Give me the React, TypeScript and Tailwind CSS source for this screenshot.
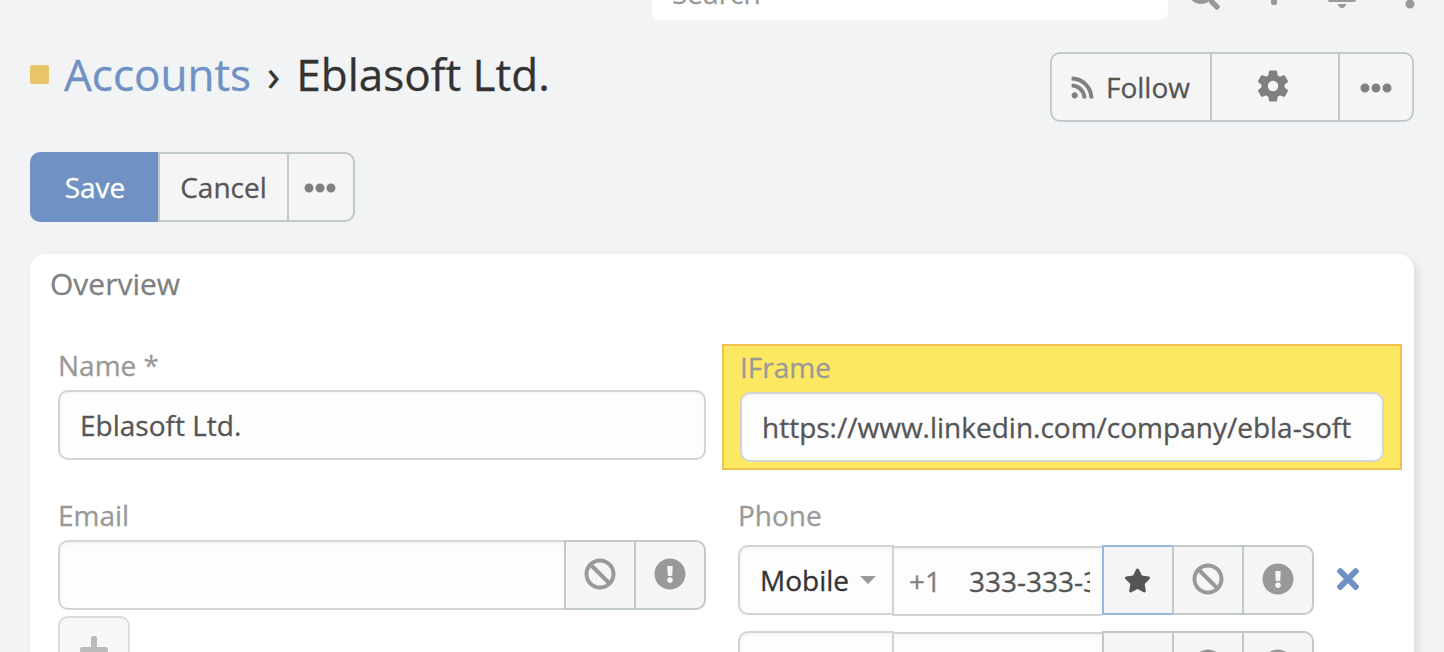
import type { ReactNode } from "react";
import {
  FaBan,
  FaBell,
  FaEllipsisH,
  FaEllipsisV,
  FaExclamationCircle,
  FaPlus,
  FaRss,
  FaSearch,
  FaStar,
  FaTimes,
} from "react-icons/fa";

const inputShadow = "shadow-[inset_0_2px_3px_rgba(0,0,0,0.04)]";

function GearIcon() {
  return (
    <svg width="32" height="32" viewBox="-16 -16 32 32" fill="currentColor">
      <circle r="8.4" fill="none" stroke="currentColor" strokeWidth="6.4" />
      {[0, 60, 120, 180, 240, 300].map((angle) => (
        <path
          key={angle}
          transform={`rotate(${angle})`}
          d="M-4.6 -8V-11L-4.1 -14.4Q-3.9 -15.5 -2.8 -15.5H2.8Q3.9 -15.5 4.1 -14.4L4.6 -11V-8z"
        />
      ))}
    </svg>
  );
}

function TopBar() {
  return (
    <header className="flex h-[26px] items-start overflow-hidden pl-[652px] text-[#999999]">
      <div className="-mt-10 flex h-[60px] w-[516px] shrink-0 items-center rounded-[8px] bg-white px-5 pt-[5px] text-[28px]">
        <span className="leading-[38px]">Search</span>
      </div>
      <div className="-mt-[22px] ml-5 flex items-start">
        <FaSearch size={32} className="shrink-0" />
        <FaPlus size={32} className="ml-[38px] shrink-0 -translate-y-[3px]" />
        <FaBell size={32} className="ml-[36px] shrink-0 -translate-y-[2px]" />
        <FaEllipsisV size={32} className="ml-9 shrink-0 -translate-y-[1px]" />
      </div>
    </header>
  );
}

function Label({ children }: { children: ReactNode }) {
  return <label className="block h-[38px] text-[28px] leading-[38px] text-[#999999]">{children}</label>;
}

function FlagButtons() {
  return (
    <>
      <button className="flex h-[70px] w-[70px] items-center justify-center border-y-2 border-l-2 border-[#c2c9ca] bg-[#f5f5f5] pb-[2px] text-[#999999]">
        <FaBan size={32} />
      </button>
      <button className="flex h-[70px] w-[72px] items-center justify-center rounded-r-[10px] border-2 border-[#c2c9ca] bg-[#f5f5f5] pb-[2px] text-[#999999]">
        <FaExclamationCircle size={32} />
      </button>
    </>
  );
}

function PhoneRow({ type, code, phone, primary }: { type?: string; code?: string; phone?: string; primary?: boolean }) {
  return (
    <div className="flex h-[72px] items-start">
      <div
        className={`flex h-[70px] w-[156px] items-center rounded-l-[10px] border-2 border-[#d1d5d5] bg-[#fdfdfd] pl-5 text-[28px] text-[#333333] ${inputShadow}`}
      >
        {type && (
          <>
            <span>{type}</span>
            <svg className="ml-[11px]" width="16" height="8" viewBox="0 0 16 8" fill="#999999">
              <path d="M0 0h16L8 8z" />
            </svg>
          </>
        )}
      </div>
      <div
        className={`-ml-0.5 mt-px flex h-[70px] w-[210px] items-center border-y-2 border-l-2 border-[#d1d5d5] bg-[#fdfdfd] pl-[15px] pr-3 text-[28px] ${inputShadow}`}
      >
        <span className="w-[60px] shrink-0 text-[#808080]">{code}</span>
        <span className="min-w-0 flex-1 overflow-hidden whitespace-nowrap text-[#555555]">{phone}</span>
      </div>
      <button
        className={`flex h-[70px] w-[70px] items-center justify-center border-y-2 border-l-2 bg-[#f5f5f5] pr-px text-[#555555] ${
          primary ? "border-[#93b9df]" : "border-[#c2c9ca]"
        }`}
      >
        {primary && <FaStar size={27} />}
      </button>
      <FlagButtons />
      {primary && <FaTimes size={32} className="ml-[18px] mt-[18px] text-[#6f91c3]" />}
    </div>
  );
}

export default function App() {
  return (
    <div className="h-[652px] w-[1444px] overflow-hidden bg-[#f1f3f5] font-['Open_Sans',sans-serif] [-webkit-text-stroke:0.3px]">
      <TopBar />

      <div className="flex h-[126px] justify-between pl-[30px] pr-[30px] pt-[26px]">
        <h1 className="-mt-2 flex h-[60px] items-center text-[44px] leading-[60px] text-[#333333]">
          <span className="mr-[15px] h-[19px] w-[19px] rounded-[2px] bg-[#e8c56a]" />
          <span className="text-[#6f91c3]">Accounts</span>
          <span className="ml-4 mr-4">›</span>
          <span>Eblasoft Ltd.</span>
        </h1>
        <div className="flex h-[70px] w-[364px] overflow-hidden rounded-[10px] border-2 border-[#c2c9ca] bg-[#f5f5f5] text-[28px] text-[#555555]">
          <button className="flex w-[158px] items-center pl-[18px]">
            <FaRss size={25} className="text-[#808080]" />
            <span className="ml-[11px]">Follow</span>
          </button>
          <button className="flex w-[128px] items-center justify-center border-l-2 border-[#c2c9ca] pb-[2px] pr-1 text-[#808080]">
            <GearIcon />
          </button>
          <button className="flex flex-1 items-center justify-center border-l-2 border-[#c2c9ca] pt-[2px] text-[#808080]">
            <FaEllipsisH size={32} />
          </button>
        </div>
      </div>

      <div className="flex h-[102px] items-start pl-[30px] text-[28px]">
        <button className="h-[70px] w-[128px] rounded-l-[10px] bg-[#6f91c3] pl-[2px] text-white">Save</button>
        <button className="h-[70px] w-[129px] border-y-2 border-l-2 border-[#c2c9ca] bg-[#f5f5f5] text-[#555555]">
          Cancel
        </button>
        <button className="flex h-[70px] w-[68px] items-center justify-center rounded-r-[10px] border-2 border-[#c2c9ca] bg-[#f5f5f5] pr-[2px] pt-[2px] text-[#808080]">
          <FaEllipsisH size={32} />
        </button>
      </div>

      <main className="ml-[30px] h-[420px] w-[1384px] rounded-[16px] bg-white shadow-[3px_4px_8px_rgba(0,0,0,0.1)]">
        <h2 className="h-[90px] pl-[20px] pt-[10px] text-[30px] leading-[40px] text-[#808080]">Overview</h2>
        <div className="flex">
          <section className="w-[692px] pl-[28px]">
            <div className="h-[150px] pt-[2px]">
              <Label>Name *</Label>
              <div
                className={`mt-[6px] flex h-[70px] w-[648px] items-center rounded-[10px] border-2 border-[#d1d5d5] bg-[#fdfdfd] px-5 text-[28px] text-[#555555] ${inputShadow}`}
              >
                Eblasoft Ltd.
              </div>
            </div>
            <div className="pt-[2px]">
              <Label>Email</Label>
              <div className="mt-[6px] flex">
                <div
                  className={`h-[70px] w-[506px] rounded-l-[10px] border-y-2 border-l-2 border-[#d1d5d5] bg-[#fdfdfd] ${inputShadow}`}
                />
                <FlagButtons />
              </div>
              <button className="mt-[6px] flex h-[70px] w-[72px] items-center justify-center rounded-[10px] border-2 border-[#dadddd] bg-[#f8f8f8] pb-[2px] text-[#bbbbbb]">
                <FaPlus size={32} />
              </button>
            </div>
          </section>
          <section className="w-[692px]">
            <div className="h-[126px] w-[680px] border-2 border-[#f3be50] bg-[#fde961] px-4 pt-[2px]">
              <Label>IFrame</Label>
              <div
                className={`mt-[6px] flex h-[70px] items-center whitespace-nowrap rounded-[10px] border-2 border-[#d1d5d5] bg-[#fdfdfd] pl-5 text-[28px] text-[#555555] ${inputShadow}`}
              >
                https://www.linkedin.com/company/ebla-soft
              </div>
            </div>
            <div className="pl-4 pt-[26px]">
              <Label>Phone</Label>
              <div className="mt-[11px] flex flex-col gap-[14px]">
                <PhoneRow type="Mobile" code="+1" phone="333-333-3333" primary />
                <PhoneRow />
              </div>
            </div>
          </section>
        </div>
      </main>
    </div>
  );
}
